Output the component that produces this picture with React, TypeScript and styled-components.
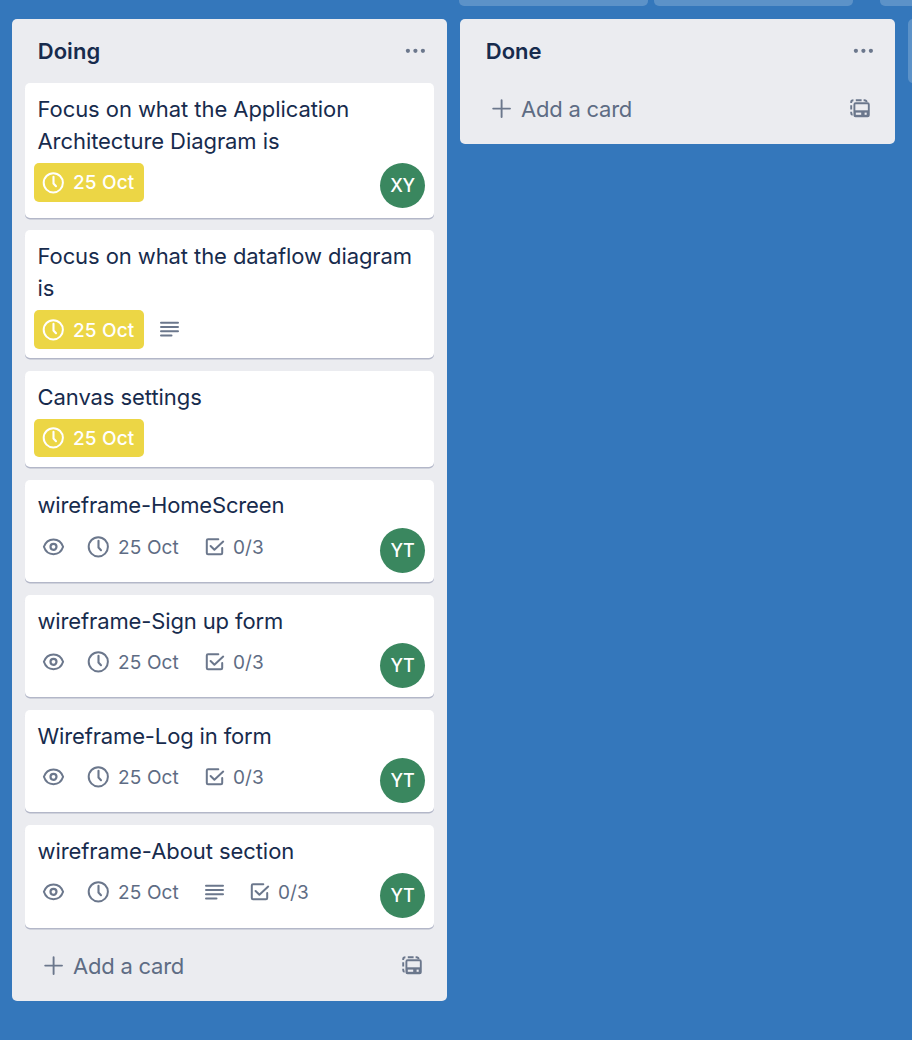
import React from "react";
import styled, { createGlobalStyle } from "styled-components";

const GlobalStyle = createGlobalStyle`
  * { box-sizing: border-box; }
  body {
    margin: 0;
    background: #3477bb;
    font-family: Inter, "Liberation Sans", sans-serif;
    color: #172b4d;
  }
`;

const Page = styled.div`
  height: 1040px;
  width: 100%;
  overflow: hidden;
  background: #3477bb;
`;

const Toolbar = styled.div`
  display: flex;
  height: 19px;
  padding-left: 459px;
  overflow: hidden;
`;

const ToolbarButton = styled.div<{ $width: number; $gap: number }>`
  flex: none;
  width: ${(p) => p.$width}px;
  height: 6px;
  margin-right: ${(p) => p.$gap}px;
  border-radius: 0 0 5px 5px;
  background: #5c92c8;
`;

const Lists = styled.main`
  display: flex;
  align-items: flex-start;
  gap: 13px;
  padding-left: 12px;
`;

const List = styled.section`
  flex: none;
  width: 435px;
  padding: 0 13px;
  border-radius: 5px;
  background: #ebecf0;
`;

const NextList = styled.div`
  flex: none;
  width: 435px;
  height: 64px;
  border-radius: 5px;
  background: #5c92c8;
`;

const ListHeader = styled.header`
  display: flex;
  align-items: center;
  justify-content: space-between;
  height: 64px;
  padding: 0 8px 0 12.7px;
  svg { display: block; }
`;

const ListTitle = styled.h2`
  margin: 0;
  font-size: 22px;
  line-height: 32px;
  font-weight: 600;
  letter-spacing: 0.05px;
`;

const Cards = styled.div`
  display: flex;
  flex-direction: column;
`;

const CardBox = styled.article<{ $height: number; $gap: number; $top: number }>`
  height: ${(p) => p.$height}px;
  margin-bottom: ${(p) => p.$gap}px;
  padding: ${(p) => p.$top}px 9px 0;
  border-radius: 5px;
  background: #fff;
  box-shadow: 0 1.5px 0 #b3b7c8;
`;

const CardTitle = styled.div<{ $tracking: number }>`
  padding-left: 3.5px;
  font-size: 22px;
  line-height: 32px;
  letter-spacing: ${(p) => p.$tracking}px;
  white-space: pre-line;
`;

const CardFooter = styled.div<{ $top: number }>`
  display: flex;
  align-items: flex-start;
  justify-content: space-between;
  margin-top: ${(p) => p.$top}px;
`;

const Badges = styled.div`
  display: flex;
  align-items: center;
  height: 38px;
  color: #5e6c84;
  svg { flex: none; display: block; }
`;

const Badge = styled.span<{ $gap?: number }>`
  display: flex;
  align-items: center;
  gap: 7px;
  margin-right: ${(p) => p.$gap ?? 0}px;
  font-size: 19px;
  line-height: 36px;
  color: #5e6c84;
  svg { color: #6b778c; }
`;

const WatchBadge = styled(Badge)`
  padding-left: 8px;
`;

const DueBadge = styled(Badge)<{ $tall: boolean }>`
  width: 110px;
  height: ${(p) => (p.$tall ? 39 : 38)}px;
  align-self: flex-start;
  padding-left: 8px;
  border-radius: 5px;
  background: #ecd645;
  color: #fff;
  font-weight: 500;
  svg { color: #fff; }
`;

const BadgeText = styled.span<{ $drop: number }>`
  padding-top: ${(p) => p.$drop}px;
  letter-spacing: 0.15px;
  white-space: nowrap;
`;

const Avatar = styled.div`
  display: flex;
  align-items: center;
  justify-content: center;
  width: 45px;
  height: 45px;
  border-radius: 50%;
  background: #3a875f;
  color: #fff;
  font-size: 18px;
  font-weight: 500;
  letter-spacing: -0.4px;
`;

const AddRow = styled.footer<{ $height: number; $top: number }>`
  display: flex;
  justify-content: space-between;
  align-items: flex-start;
  height: ${(p) => p.$height}px;
  padding: ${(p) => p.$top}px 11px 0 19px;
  color: #5e6c84;
  svg { display: block; color: #6b778c; }
`;

const AddButton = styled.div`
  display: flex;
  align-items: center;
  gap: 9px;
  height: 32px;
  font-size: 22px;
  letter-spacing: -0.23px;
`;

const TemplateButton = styled.div`
  display: flex;
  align-items: center;
  height: 32px;
`;

const Dots = () => (
  <svg width="22" height="6" viewBox="0 0 22 6" fill="#6b778c">
    <circle cx="3.9" cy="2.8" r="2.1" />
    <circle cx="11.4" cy="2.8" r="2.1" />
    <circle cx="18.9" cy="2.8" r="2.1" />
  </svg>
);

const Clock = () => (
  <svg width="24" height="24" viewBox="0 0 24 24" fill="none" stroke="currentColor" strokeWidth="2" strokeLinecap="round" strokeLinejoin="round">
    <circle cx="11.3" cy="11.8" r="9.6" />
    <path d="M11.5 5.8V12.5L14 15.2" strokeWidth="2.1" />
  </svg>
);

const Eye = () => (
  <svg width="24" height="24" viewBox="0 0 24 24" fill="none" stroke="currentColor" strokeWidth="2">
    <path d="M1.9 11.8C3.5 7 7.3 4.4 11.5 4.4S19.5 7 21.1 11.8C19.5 16.6 15.7 19.2 11.5 19.2S3.5 16.6 1.9 11.8Z" strokeLinejoin="round" />
    <circle cx="11.5" cy="11.8" r="3" strokeWidth="2.2" />
  </svg>
);

const Description = () => (
  <svg width="22" height="24" viewBox="0 0 22 24" fill="none" stroke="#6b778c" strokeWidth="2" strokeLinecap="round">
    <path d="M3 5.7H20M3 9.9H20M3 14.2H20M3 18.4H13.5" />
  </svg>
);

const Check = () => (
  <svg width="22" height="24" viewBox="0 0 22 24" fill="none" stroke="currentColor" strokeWidth="2" strokeLinecap="round" strokeLinejoin="round">
    <path d="M14.3 4.2H4A1.2 1.2 0 0 0 2.8 5.4V18A1.2 1.2 0 0 0 4 19.2H17A1.2 1.2 0 0 0 18.2 18V13" />
    <path d="M6.6 11L10.4 14.7L19.2 6.6" />
  </svg>
);

const Plus = () => (
  <svg width="20" height="20" viewBox="0 0 20 20" fill="none" stroke="currentColor" strokeWidth="1.9" strokeLinecap="round">
    <path d="M9.6 1.2V18M1.2 9.6H18" />
  </svg>
);

const Template = () => (
  <svg width="22" height="22" viewBox="0 0 22 22" fill="none">
    <g stroke="#6b778c" strokeWidth="1.9">
      <path d="M2.2 5V4Q2.2 2.2 4.4 2.2M6.8 2.2H12.6M14.6 2.2H15.4Q17.4 2.2 17.7 4M2.2 7.2V11.6M2.2 13.8V15Q2.2 16.6 3.6 16.8" />
      <rect x="5.4" y="5.2" width="14.4" height="13.2" rx="1.2" />
    </g>
    <path d="M5.4 12.3H19.8V18.4H5.4Z" fill="#6b778c" />
    <rect x="6.8" y="14.6" width="5.4" height="2.2" fill="#ebecf0" />
    <rect x="15.6" y="14.6" width="2.1" height="2.2" fill="#ebecf0" />
  </svg>
);

interface CardData {
  title: string;
  height: number;
  tracking: number;
  gap?: number;
  top?: number;
  drop?: number;
  due?: boolean;
  tall?: boolean;
  description?: boolean;
  member?: string;
}

const cards: CardData[] = [
  { title: "Focus on what the Application\nArchitecture Diagram is", height: 135, gap: 12, drop: 1, tracking: -0.07, due: true, tall: true, member: "XY" },
  { title: "Focus on what the dataflow diagram\nis", height: 128, tracking: -0.09, due: true, tall: true, description: true },
  { title: "Canvas settings", height: 96, tracking: -0.07, due: true },
  { title: "wireframe-HomeScreen", height: 102, top: 9, tracking: -0.16, member: "YT" },
  { title: "wireframe-Sign up form", height: 102, tracking: -0.13, member: "YT" },
  { title: "Wireframe-Log in form", height: 102, tracking: -0.14, member: "YT" },
  { title: "wireframe-About section", height: 103, tracking: -0.07, description: true, member: "YT" },
];

const Card = ({ card }: { card: CardData }) => {
  const top = card.top ?? 10;
  const drop = card.drop ?? 2;
  return (
    <CardBox $height={card.height} $gap={card.gap ?? 13} $top={top}>
      <CardTitle $tracking={card.tracking}>{card.title}</CardTitle>
      <CardFooter $top={16 - top}>
        {card.due ? (
          <Badges>
            <DueBadge $tall={!!card.tall} $gap={14}>
              <Clock />
              <BadgeText $drop={drop}>25 Oct</BadgeText>
            </DueBadge>
            {card.description && <Description />}
          </Badges>
        ) : (
          <Badges>
            <WatchBadge $gap={21}>
              <Eye />
            </WatchBadge>
            <Badge $gap={card.description ? 24 : 25}>
              <Clock />
              <BadgeText $drop={drop}>25 Oct</BadgeText>
            </Badge>
            {card.description && (
              <Badge $gap={24}>
                <Description />
              </Badge>
            )}
            <Badge>
              <Check />
              <BadgeText $drop={drop}>0/3</BadgeText>
            </Badge>
          </Badges>
        )}
        {card.member && <Avatar>{card.member}</Avatar>}
      </CardFooter>
    </CardBox>
  );
};

const AddCard = ({ height, top }: { height: number; top: number }) => (
  <AddRow $height={height} $top={top}>
    <AddButton>
      <Plus />
      Add a card
    </AddButton>
    <TemplateButton>
      <Template />
    </TemplateButton>
  </AddRow>
);

export default function App() {
  return (
    <Page>
      <GlobalStyle />
      <Toolbar>
        <ToolbarButton $width={189} $gap={6} />
        <ToolbarButton $width={199} $gap={27} />
        <ToolbarButton $width={100} $gap={0} />
      </Toolbar>
      <Lists>
        <List>
          <ListHeader>
            <ListTitle>Doing</ListTitle>
            <Dots />
          </ListHeader>
          <Cards>
            {cards.map((card) => (
              <Card key={card.title} card={card} />
            ))}
          </Cards>
          <AddCard height={60} top={9} />
        </List>
        <List>
          <ListHeader>
            <ListTitle>Done</ListTitle>
            <Dots />
          </ListHeader>
          <AddCard height={61} top={10} />
        </List>
        <NextList />
      </Lists>
    </Page>
  );
}
